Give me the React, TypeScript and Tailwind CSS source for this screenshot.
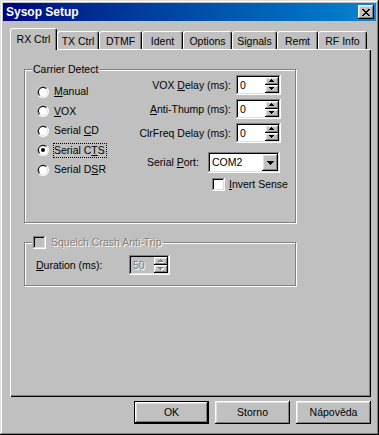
import React from "react";

const RAISED =
  "shadow-[inset_-1px_-1px_#000,inset_1px_1px_#fff,inset_-2px_-2px_#808080,inset_2px_2px_#dfdfdf]";
const SUNKEN =
  "shadow-[inset_-1px_-1px_#fff,inset_1px_1px_#808080,inset_-2px_-2px_#dfdfdf,inset_2px_2px_#000]";
const DIS = "text-[#808080] [text-shadow:1px_1px_0_#fff]";

function Radio({ checked }: { checked?: boolean }) {
  return (
    <svg width="12" height="12" viewBox="0 0 12 12" className="shrink-0">
      <circle cx="6" cy="6" r="6" fill="#fff" />
      <path d="M1.76 10.24A6 6 0 0 1 10.24 1.76Z" fill="#808080" />
      <circle cx="6" cy="6" r="5" fill="#dfdfdf" />
      <path d="M2.46 9.54A5 5 0 0 1 9.54 2.46Z" fill="#000" />
      <circle cx="6" cy="6" r="4" fill="#fff" />
      {checked && <circle cx="6" cy="6" r="2" fill="#000" />}
    </svg>
  );
}

function Check({ disabled }: { disabled?: boolean }) {
  return (
    <div
      className={
        disabled
          ? "w-[13px] h-[13px] shrink-0 bg-[#c0c0c0] shadow-[inset_-1px_-1px_#fff,inset_1px_1px_#808080,inset_-2px_-2px_#dfdfdf,inset_2px_2px_#000]"
          : "w-[13px] h-[13px] shrink-0 bg-white shadow-[inset_-1px_-1px_#fff,inset_1px_1px_#808080,inset_-2px_-2px_#dfdfdf,inset_2px_2px_#000]"
      }
    />
  );
}

function Arrow({ up, disabled }: { up?: boolean; disabled?: boolean }) {
  const d = up ? "M2 0h1v1h1v1h1v1H0V2h1V1h1z" : "M0 0h5v1H4v1H3v1H2V2H1V1H0z";
  return (
    <svg width="6" height="4" viewBox="0 0 6 4">
      {disabled && <path d={d} fill="#fff" transform="translate(1 1)" />}
      <path d={d} fill={disabled ? "#808080" : "#000"} />
    </svg>
  );
}

function Spin({ value, disabled, w }: { value: string; disabled?: boolean; w: string }) {
  return (
    <div
      className={
        (disabled ? "bg-[#c0c0c0] " : "bg-white ") +
        w +
        " h-[20px] flex p-[2px] shrink-0 " +
        SUNKEN
      }
    >
      <div className={"flex-1 pl-[2px] leading-[16px] " + (disabled ? DIS : "")}>{value}</div>
      <div className="flex flex-col w-[14px]">
        <div className={"flex-1 bg-[#c0c0c0] flex items-center justify-center " + RAISED}>
          <Arrow up disabled={disabled} />
        </div>
        <div className={"flex-1 bg-[#c0c0c0] flex items-center justify-center " + RAISED}>
          <Arrow disabled={disabled} />
        </div>
      </div>
    </div>
  );
}

function CloseX() {
  const rows = [
    [0, 1, 6, 7],
    [1, 2, 5, 6],
    [2, 3, 4, 5],
    [3, 4],
    [2, 3, 4, 5],
    [1, 2, 5, 6],
    [0, 1, 6, 7],
  ];
  return (
    <svg width="8" height="7" viewBox="0 0 8 7">
      {rows.map((r, y) => r.map((x) => <rect key={`${x}-${y}`} x={x} y={y} width="1" height="1" fill="#000" />))}
    </svg>
  );
}

const tabs: [string, number][] = [
  ["RX Ctrl", 47],
  ["TX Ctrl", 42],
  ["DTMF", 43],
  ["Ident", 41],
  ["Options", 49],
  ["Signals", 45],
  ["Remt", 41],
  ["RF Info", 49],
];

function RadioRow({ label, checked, focus }: { label: React.ReactNode; checked?: boolean; focus?: boolean }) {
  return (
    <div className="h-[19.5px] flex items-center gap-[4px]">
      <Radio checked={checked} />
      <span
        className={
          focus
            ? "border border-dotted border-black leading-[13px] pr-[1px]"
            : "border border-transparent leading-[13px] pr-[1px]"
        }
      >
        {label}
      </span>
    </div>
  );
}

export default function App() {
  return (
    <div
      className="w-[379px] h-[435px] bg-[#c0c0c0] p-[3px] flex flex-col text-black text-[10.5px] leading-[13px] shadow-[inset_-1px_-1px_#000,inset_1px_1px_#dfdfdf,inset_-2px_-2px_#808080,inset_2px_2px_#fff]"
      style={{ fontFamily: '"Liberation Sans", Arial, sans-serif' }}
    >
      {/* Title bar */}
      <div className="h-[18px] flex items-center justify-between bg-linear-to-r from-[#000080] to-[#1084d0] pl-[3px] pr-[2px]">
        <span className="text-white font-bold text-[12px]">Sysop Setup</span>
        <div className={"w-[16px] h-[14px] bg-[#c0c0c0] flex items-center justify-center " + RAISED}>
          <CloseX />
        </div>
      </div>

      <div className="pl-[7px] pt-[7px]">
        {/* Tabs */}
        <div className="flex items-end h-[21px] relative z-10">
          {tabs.map(([t, w], i) =>
            i === 0 ? (
              <div
                key={t}
                className="h-[22px] -mb-px bg-[#c0c0c0] border-l border-t border-r border-white border-r-black rounded-t-[3px] shadow-[inset_-1px_0_#808080] flex justify-center pt-[4px] shrink-0"
                style={{ width: w }}
              >
                {t}
              </div>
            ) : (
              <div
                key={t}
                className="h-[18px] bg-[#c0c0c0] border-l border-t border-r border-white border-r-black rounded-t-[3px] shadow-[inset_-1px_0_#808080] flex justify-center pt-[3px] shrink-0"
                style={{ width: w }}
              >
                {t}
              </div>
            )
          )}
        </div>

        {/* Panel */}
        <div className="w-[361px] h-[348px] border-l border-t border-white shadow-[inset_-1px_-1px_#000,inset_-2px_-2px_#808080] pl-[13px] pt-[19px]">
          {/* Carrier Detect */}
          <div className="relative w-[272px] h-[154px] border border-[#808080] shadow-[inset_1px_1px_#fff,1px_1px_#fff] flex justify-between">
            <div className="absolute -top-[7px] left-[7px] px-[1px] bg-[#c0c0c0] leading-[13px]">Carrier Detect</div>
            <div className="pl-[12px] pt-[12px] flex flex-col">
              <RadioRow label={<><u>M</u>anual</>} />
              <RadioRow label={<><u>V</u>OX</>} />
              <RadioRow label={<>Serial <u>C</u>D</>} />
              <RadioRow label={<>Serial C<u>T</u>S</>} checked focus />
              <RadioRow label={<>Serial D<u>S</u>R</>} />
            </div>
            <div className="w-[140px] mr-[14px] pt-[5px] flex flex-col">
              <div className="flex items-center justify-end gap-[5px] h-[20px]">
                <span className="whitespace-nowrap">VOX <u>D</u>elay (ms):</span>
                <Spin value="0" w="w-[45px]" />
              </div>
              <div className="flex items-center justify-end gap-[5px] h-[20px] mt-[4px]">
                <span className="whitespace-nowrap"><u>A</u>nti-Thump (ms):</span>
                <Spin value="0" w="w-[45px]" />
              </div>
              <div className="flex items-center justify-end gap-[5px] h-[20px] mt-[4px]">
                <span className="whitespace-nowrap">ClrFreq Delay (ms):</span>
                <Spin value="0" w="w-[45px]" />
              </div>
              <div className="flex items-center h-[21px] mt-[9px] pl-[6px]">
                <span className="w-[61px] whitespace-nowrap">Serial <u>P</u>ort:</span>
                <div className={"w-[72px] h-[21px] bg-white flex p-[2px] " + SUNKEN}>
                  <div className="flex-1 pl-[2px] leading-[17px]">COM2</div>
                  <div className={"w-[16px] bg-[#c0c0c0] flex items-center justify-center " + RAISED}>
                    <svg width="7" height="4" viewBox="0 0 7 4">
                      <path d="M0 0h7v1H6v1H5v1H4v1H3V3H2V2H1V1H0z" fill="#000" />
                    </svg>
                  </div>
                </div>
              </div>
              <div className="flex items-center mt-[5px] pl-[71px] gap-[4px]">
                <Check />
                <span className="whitespace-nowrap"><u>I</u>nvert Sense</span>
              </div>
            </div>
          </div>

          {/* Squelch Crash Anti-Trip */}
          <div className="relative mt-[19px] w-[272px] h-[44px] border border-[#808080] shadow-[inset_1px_1px_#fff,1px_1px_#fff] pl-[11px] pt-[12px]">
            <div className="absolute -top-[7px] left-[7px] px-[1px] bg-[#c0c0c0] flex items-center gap-[5px] h-[13px]">
              <Check disabled />
              <span className={"whitespace-nowrap " + DIS}>Squelch Crash Anti-Trip</span>
            </div>
            <div className="flex items-center h-[20px]">
              <span className="w-[93px] whitespace-nowrap"><u>D</u>uration (ms):</span>
              <Spin value="50" disabled w="w-[41px]" />
            </div>
          </div>
        </div>

        {/* Buttons */}
        <div className="w-[361px] flex justify-end gap-[6px] mt-[4px]">
          <div className="w-[75px] h-[23px] border border-black">
            <div className={"w-full h-full flex items-center justify-center " + RAISED}>OK</div>
          </div>
          <div className={"w-[75px] h-[23px] flex items-center justify-center " + RAISED}>Storno</div>
          <div className={"w-[75px] h-[23px] flex items-center justify-center " + RAISED}>Nápověda</div>
        </div>
      </div>
    </div>
  );
}
